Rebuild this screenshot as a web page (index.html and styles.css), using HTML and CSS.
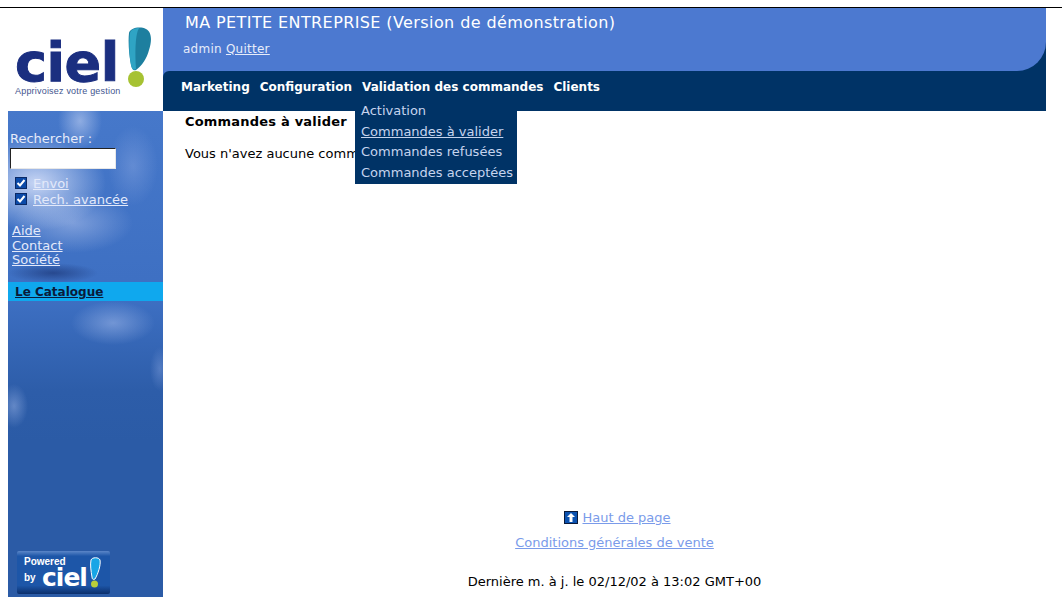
FILE: index.html
```html
<!DOCTYPE html>
<html lang="fr">
<head>
    <meta charset="UTF-8">
    <meta name="viewport" content="width=device-width, initial-scale=1.0">
    <title>MA PETITE ENTREPRISE</title>
    <link rel="stylesheet" href="styles.css">
</head>
<body>
    <div class="page">
        <div class="logo">
            <div class="logo-mark">
                <span class="logo-word">ciel</span>
                <svg class="logo-bang" width="26" height="62" viewBox="0 0 26 62">
                    <path d="M2 6C3 1 13 -1 19 2C25 5 25 14 22 23C20 31 15 39 9 43C6 44 5 42 4 38C2 28 1 15 2 6Z" fill="#1d7f9f"/>
                    <path d="M3 6C4 2 9 1 12 1C8 8 8 26 9 42C6 44 5 42 4 38C2 28 2 15 3 6Z" fill="#2fa4c4"/>
                    <circle cx="9" cy="52" r="8" fill="#a6c232"/>
                </svg>
            </div>
            <div class="logo-tag">Apprivoisez votre gestion</div>
        </div>

        <div class="header">
            <div class="header-top">
                <div class="company">MA PETITE ENTREPRISE (Version de démonstration)</div>
                <div class="user">admin <a href="#">Quitter</a></div>
            </div>
            <ul class="menu">
                <li>Marketing</li>
                <li>Configuration</li>
                <li class="menu-open">Validation des commandes
                    <div class="dropdown">
                        <a href="#">Activation</a>
                        <a href="#" class="current">Commandes à valider</a>
                        <a href="#">Commandes refusées</a>
                        <a href="#">Commandes acceptées</a>
                    </div>
                </li>
                <li>Clients</li>
            </ul>
        </div>

        <div class="sidebar">
            <label class="search-label" for="search">Rechercher :</label>
            <input class="search-input" type="text" id="search">
            <div class="options">
                <div class="option"><span class="check"><svg width="10" height="10" viewBox="0 0 10 10"><path d="M1.5 5L4 7.5L8.5 2" fill="none" stroke="#fff" stroke-width="2"/></svg></span><a href="#">Envoi</a></div>
                <div class="option"><span class="check"><svg width="10" height="10" viewBox="0 0 10 10"><path d="M1.5 5L4 7.5L8.5 2" fill="none" stroke="#fff" stroke-width="2"/></svg></span><a href="#">Rech. avancée</a></div>
            </div>
            <div class="side-links">
                <a href="#">Aide</a>
                <a href="#">Contact</a>
                <a href="#">Société</a>
            </div>
            <div class="catalog"><a href="#">Le Catalogue</a></div>
            <div class="powered">
                <div class="powered-text">Powered<br>by</div>
                <span class="powered-word">ciel</span>
                <svg class="powered-bang" width="13" height="32" viewBox="0 0 13 32">
                    <path d="M2 3C3 0 10 0 11 3C12 8 9 17 6 22C4 23 3 22 3 20C2 14 1 8 2 3Z" fill="#17a5e6" stroke="#fff" stroke-width="1"/>
                    <circle cx="5.5" cy="27" r="3.5" fill="#b9cf3a"/>
                </svg>
            </div>
        </div>

        <div class="main">
            <h1>Commandes à valider</h1>
            <p class="empty">Vous n'avez aucune commande à valider.</p>
            <div class="footer">
                <div class="footer-top">
                    <svg width="14" height="13" viewBox="0 0 14 13"><rect width="14" height="13" fill="#0a1a3a"/><rect x="1" y="1" width="12" height="11" fill="#0b52b0"/><path d="M7 2L11 6H8.5V11H5.5V6H3Z" fill="#fff"/></svg>
                    <a href="#">Haut de page</a>
                </div>
                <div><a href="#">Conditions générales de vente</a></div>
                <div class="updated">Dernière m. à j. le 02/12/02 à 13:02 GMT+00</div>
            </div>
        </div>
    </div>
</body>
</html>
```

FILE: styles.css
```css
html, body {
    height: 100%;
}
body {
    margin: 0;
    overflow: hidden;
    background-color: #fff;
    color: #000;
    font-family: "DejaVu Sans", Verdana, sans-serif;
    font-size: 13px;
}
a {
    color: inherit;
}
.page {
    display: grid;
    grid-template-columns: 155px 883px;
    grid-template-rows: 103px 486px;
    margin-top: 7px;
    padding-left: 8px;
    border-top: 1px solid #000;
}
.logo {
    padding: 19px 0 0 7px;
    background-color: #fff;
}
.logo-mark {
    display: flex;
    align-items: flex-start;
    height: 60px;
}
.logo-word {
    margin-top: 9px;
    font-size: 54px;
    font-weight: bold;
    line-height: 54px;
    letter-spacing: -0.5px;
    color: #1b2f80;
    -webkit-text-stroke: 1px #1b2f80;
}
.logo-bang {
    margin-left: 8px;
}
.logo-tag {
    margin-top: -1px;
    font-family: "Liberation Sans", sans-serif;
    font-size: 9px;
    letter-spacing: 0.2px;
    line-height: 10px;
    color: #45568f;
}
.header {
    display: flex;
    flex-direction: column;
    background: linear-gradient(90deg, #4c79d0 50%, #003366 50%);
}
.header-top {
    height: 63px;
    padding: 5px 0 0 22px;
    box-sizing: border-box;
    background-color: #4c79d0;
    border-radius: 0 0 29px 0;
    color: #fff;
}
.company {
    font-size: 16px;
    line-height: 19px;
    letter-spacing: 0.4px;
}
.user {
    margin-top: 10px;
    margin-left: -2px;
    font-size: 12px;
    letter-spacing: 0.25px;
    line-height: 15px;
    color: #e6ecfa;
}
.menu {
    display: flex;
    flex: 1;
    gap: 10px;
    margin: 0;
    padding: 9px 0 0 18px;
    list-style: none;
    background-color: #003366;
    border-radius: 6px 0 0 0;
    color: #fff;
    font-size: 12px;
    font-weight: bold;
}
.menu-open {
    position: relative;
}
.dropdown {
    position: absolute;
    top: 20px;
    left: -7px;
    z-index: 2;
    width: 162px;
    padding: 1px 0 0 6px;
    box-sizing: border-box;
    background-color: #003366;
    font-size: 13px;
    font-weight: normal;
    white-space: nowrap;
}
.dropdown a {
    display: block;
    line-height: 20.7px;
    text-decoration: none;
    color: #c6d4ee;
}
.dropdown a.current {
    text-decoration: underline;
}
.sidebar {
    position: relative;
    padding-top: 20px;
    color: #fff;
    background-color: #2b5ba6;
    background-image:
        radial-gradient(ellipse 22px 28px at 72px 10px, rgba(215, 225, 250, 0.5), rgba(215, 225, 250, 0) 100%),
        radial-gradient(ellipse 70px 48px at 28px 72px, rgba(222, 230, 252, 0.85), rgba(222, 230, 252, 0) 100%),
        radial-gradient(ellipse 60px 30px at 65px 112px, rgba(200, 212, 245, 0.45), rgba(200, 212, 245, 0) 100%),
        radial-gradient(ellipse 25px 40px at 125px 55px, rgba(170, 190, 238, 0.3), rgba(170, 190, 238, 0) 100%),
        radial-gradient(ellipse 45px 10px at 45px 162px, rgba(20, 40, 100, 0.55), rgba(20, 40, 100, 0) 100%),
        radial-gradient(ellipse 42px 22px at 105px 212px, rgba(170, 192, 238, 0.5), rgba(170, 192, 238, 0) 100%),
        radial-gradient(ellipse 14px 22px at 6px 295px, rgba(165, 188, 235, 0.45), rgba(165, 188, 235, 0) 100%),
        radial-gradient(ellipse 10px 22px at 152px 258px, rgba(150, 175, 230, 0.35), rgba(150, 175, 230, 0) 100%),
        linear-gradient(180deg, #4678ca 0, #3d6fc2 190px, #2d5da9 280px, #2b5ba6 330px);
}
.search-label {
    display: block;
    padding-left: 2px;
    line-height: 15px;
    color: #e6ebfa;
}
.search-input {
    display: block;
    width: 106px;
    height: 21px;
    box-sizing: border-box;
    margin: 2px 0 0 2px;
    border-style: solid;
    border-width: 1px;
    border-color: #222 #e8e8e8 #e8e8e8 #222;
    background-color: #fff;
}
.options {
    margin-top: 6px;
    padding-left: 7px;
}
.option {
    display: flex;
    align-items: center;
    gap: 6px;
    height: 16px;
}
.option a {
    color: #e3e9fa;
}
.check {
    display: flex;
    align-items: center;
    justify-content: center;
    width: 12px;
    height: 12px;
    background-color: #0b4aa8;
    border: 1px solid #0a2a66;
    box-sizing: border-box;
}
.side-links {
    margin-top: 17px;
    padding-left: 4px;
}
.side-links a {
    display: block;
    line-height: 14.5px;
    color: #e3e9fa;
}
.catalog {
    margin-top: 14px;
    padding-left: 7px;
    height: 19px;
    line-height: 20px;
    background-color: #0fa8ee;
    font-size: 12px;
    font-weight: bold;
    color: #0a1a3a;
}
.powered {
    position: absolute;
    left: 9px;
    bottom: 3px;
    width: 93px;
    height: 43px;
    background: linear-gradient(180deg, #5b86c8 0, #1d56a8 12%, #1d56a8 80%, #0b2f6c 100%);
    border-radius: 2px;
}
.powered-text {
    position: absolute;
    left: 7px;
    top: 3px;
    font-family: "Liberation Sans", sans-serif;
    font-size: 10px;
    font-weight: bold;
    line-height: 16px;
}
.powered-word {
    position: absolute;
    left: 25px;
    top: 17px;
    font-size: 25px;
    font-weight: bold;
    line-height: 20px;
    letter-spacing: -1px;
}
.powered-bang {
    position: absolute;
    left: 72px;
    top: 6px;
}
.main {
    display: flex;
    flex-direction: column;
    padding: 2px 0 0 22px;
}
h1 {
    margin: 0;
    font-size: 13px;
    letter-spacing: 0.2px;
    line-height: 18px;
    font-weight: bold;
}
.empty {
    margin: 15px 0 0;
    line-height: 15px;
}
.footer {
    display: flex;
    flex-direction: column;
    align-items: center;
    margin-top: auto;
    padding-bottom: 8px;
    padding-right: 2px;
}
.footer a {
    color: #7a9bea;
}
.footer > div {
    line-height: 15px;
}
.footer-top {
    display: flex;
    align-items: center;
    gap: 4px;
    margin-left: 6px;
}
.footer > div + div {
    margin-top: 10px;
}
.footer > .updated {
    margin-top: 24px;
}
```
